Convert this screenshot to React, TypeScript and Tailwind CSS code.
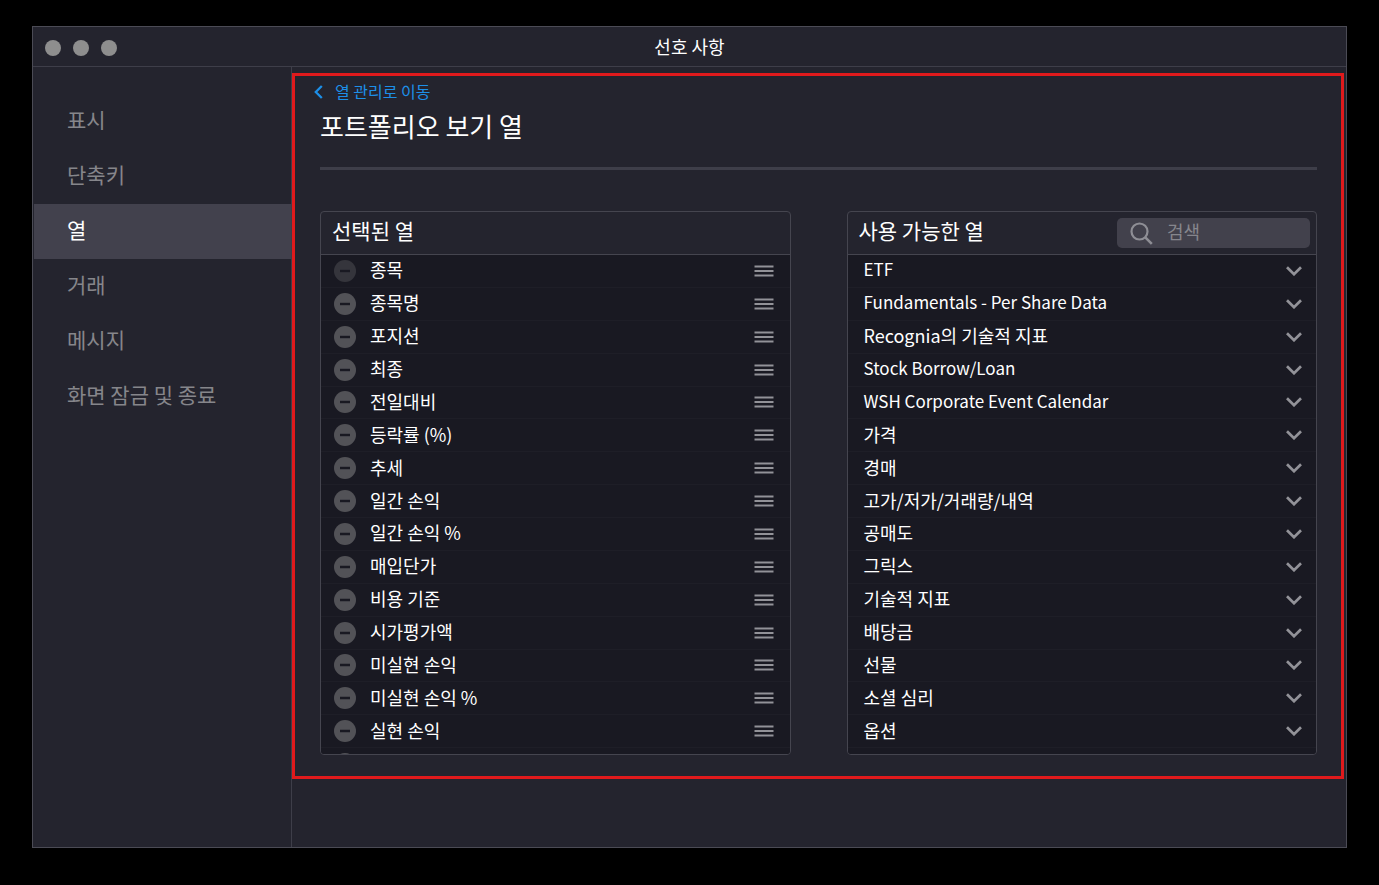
import React, { useState } from 'react';

const navItems = ['표시', '단축키', '열', '거래', '메시지', '화면 잠금 및 종료'];

const initialColumns = [
  '종목',
  '종목명',
  '포지션',
  '최종',
  '전일대비',
  '등락률 (%)',
  '추세',
  '일간 손익',
  '일간 손익 %',
  '매입단가',
  '비용 기준',
  '시가평가액',
  '미실현 손익',
  '미실현 손익 %',
  '실현 손익',
  '',
];

const categories = [
  'ETF',
  'Fundamentals - Per Share Data',
  'Recognia의 기술적 지표',
  'Stock Borrow/Loan',
  'WSH Corporate Event Calendar',
  '가격',
  '경매',
  '고가/저가/거래량/내역',
  '공매도',
  '그릭스',
  '기술적 지표',
  '배당금',
  '선물',
  '소셜 심리',
  '옵션',
];

// Latin glyphs run wide next to Hangul, so all-Latin labels are set one step smaller
const isLatin = (text: string) => /^[\x20-\x7e]+$/.test(text);

const MinusIcon = () => (
  <svg width="22" height="22" viewBox="0 0 22 22" fill="none">
    <circle cx="11" cy="11" r="11" fill="#525257" />
    <path d="M6 11h10" stroke="#191922" strokeWidth="2.4" />
  </svg>
);

const DragIcon = () => (
  <svg width="20" height="12" viewBox="0 0 20 12" fill="none">
    <path d="M0.5 1.5h19M0.5 6h19M0.5 10.5h19" stroke="#929298" strokeWidth="1.8" />
  </svg>
);

const ChevronDownIcon = () => (
  <svg width="16" height="10" viewBox="0 0 16 10" fill="none">
    <path d="M1 1.2l7 7 7-7" stroke="#929298" strokeWidth="2.7" />
  </svg>
);

const ChevronLeftIcon = () => (
  <svg width="9" height="14" viewBox="0 0 9 14" fill="none">
    <path d="M7.8 1L1.8 7l6 6" stroke="#1d8fe8" strokeWidth="2.3" />
  </svg>
);

const SearchIcon = () => (
  <svg width="23" height="23" viewBox="0 0 23 23" fill="none" className="shrink-0">
    <circle cx="9.5" cy="9.5" r="8" stroke="#8e8e95" strokeWidth="2.2" />
    <path d="M15.3 15.3l6.5 6.5" stroke="#8e8e95" strokeWidth="2.6" />
  </svg>
);

const App: React.FC = () => {
  const [active, setActive] = useState('열');
  const [columns, setColumns] = useState(initialColumns);
  const [search, setSearch] = useState('');

  const removeColumn = (index: number) => {
    setColumns(columns.filter((_, i) => i !== index));
  };

  const visible = categories.filter((c) => c.toLowerCase().includes(search.toLowerCase()));

  return (
    <div className="flex min-h-screen flex-col bg-black px-8 pt-[26px] pb-[37px] font-['Noto_Sans_CJK_KR',sans-serif] text-white">
      <div className="flex flex-1 flex-col border border-[#4b4b55] bg-[#24242e]">
        {/* Title bar */}
        <header className="grid h-10 grid-cols-[1fr_auto_1fr] items-center border-b border-[#3e3e49] px-3">
          <div className="flex gap-3 pt-[2px]">
            <span className="h-4 w-4 rounded-full bg-[#8e8e8e]" />
            <span className="h-4 w-4 rounded-full bg-[#8e8e8e]" />
            <span className="h-4 w-4 rounded-full bg-[#8e8e8e]" />
          </div>
          <h1 className="pb-[2px] text-[18px] leading-6">선호 사항</h1>
        </header>

        <div className="flex flex-1">
          {/* Sidebar */}
          <nav className="w-[259px] shrink-0 border-r border-[#3e3e49] pt-[27px] pl-px">
            {navItems.map((item) => (
              <button
                key={item}
                type="button"
                onClick={() => setActive(item)}
                className={`flex h-[55px] w-full items-center px-[33px] pb-1 text-left text-[21px] ${
                  active === item ? 'bg-[#42414d] text-white' : 'text-[#86868b]'
                }`}
              >
                {item}
              </button>
            ))}
          </nav>

          {/* Content */}
          <main className="min-w-0 flex-1 pt-[6px] pr-[2px]">
            <section className="border-3 border-[#e01a1c] pr-6 pb-[21px] pl-[25px]">
              <a
                href="#columns"
                className="-ml-[6px] flex h-8 items-center gap-3 text-[16px] text-[#1d8fe8]"
              >
                <ChevronLeftIcon />
                <span className="pb-[2px]">열 관리로 이동</span>
              </a>
              <h2 className="text-[26px] leading-9">포트폴리오 보기 열</h2>
              <hr className="mt-[23px] border-t-3 border-[#3e3e49]" />

              <div className="mt-[41px] grid grid-cols-2 gap-14">
                <div className="overflow-hidden rounded border border-[#45454f]">
                  <div className="flex h-[43px] items-center border-b border-[#45454f] px-[11px]">
                    <h3 className="pb-[6px] text-[21px] leading-7">선택된 열</h3>
                  </div>
                  <div className="h-[499px] overflow-hidden bg-[#191922]">
                    <ul className="grid h-[526px] grid-rows-16">
                      {columns.map((column, index) => (
                        <li
                          key={column}
                          className="flex items-center border-b border-[#1e1e27] pr-4 pl-[13px]"
                        >
                          <button
                            type="button"
                            aria-label="제거"
                            disabled={index === 0}
                            onClick={() => removeColumn(index)}
                            className="disabled:opacity-50"
                          >
                            <MinusIcon />
                          </button>
                          <span className="ml-[14px] flex-1 pb-[3px] text-[18px] leading-6">
                            {column}
                          </span>
                          <button type="button" aria-label="이동">
                            <DragIcon />
                          </button>
                        </li>
                      ))}
                    </ul>
                  </div>
                </div>

                <div className="overflow-hidden rounded border border-[#45454f]">
                  <div className="flex h-[43px] items-center justify-between border-b border-[#45454f] pr-[6px] pl-[11px]">
                    <h3 className="pb-[6px] text-[21px] leading-7">사용 가능한 열</h3>
                    <label className="flex h-[30px] w-[193px] items-center gap-[14px] rounded-[5px] bg-[#42414c] px-[13px]">
                      <SearchIcon />
                      <input
                        type="text"
                        aria-label="검색"
                        placeholder="검색"
                        value={search}
                        onChange={(e) => setSearch(e.target.value)}
                        className="w-full min-w-0 bg-transparent pb-[4px] text-[18px] leading-6 outline-none placeholder:text-[#86868d]"
                      />
                    </label>
                  </div>
                  <div className="h-[499px] overflow-hidden bg-[#191922]">
                    <ul className="grid h-[526px] grid-rows-16">
                      {visible.map((category) => (
                        <li key={category} className="border-b border-[#1e1e27]">
                          <button
                            type="button"
                            className={`flex h-full w-full items-center justify-between pr-[14px] pl-4 text-left leading-6 ${
                              isLatin(category) ? 'text-[17px]' : 'text-[18px]'
                            }`}
                          >
                            <span className="pb-[3px]">{category}</span>
                            <ChevronDownIcon />
                          </button>
                        </li>
                      ))}
                    </ul>
                  </div>
                </div>
              </div>
            </section>
          </main>
        </div>
      </div>
    </div>
  );
};

export default App;
